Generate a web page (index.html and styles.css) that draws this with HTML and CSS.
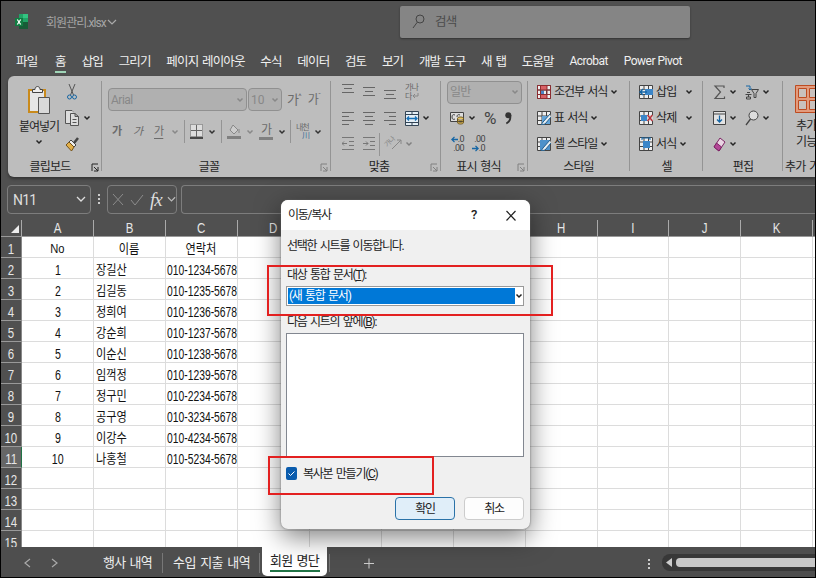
FILE: index.html
```html
<!DOCTYPE html>
<html lang="ko">
<head>
  <meta charset="utf-8">
  <title>회원관리.xlsx</title>
  <link rel="stylesheet" href="styles.css">
</head>
<body>
  <!-- 공통 아이콘 -->
  <svg class="defs">
    <symbol id="chev" viewBox="0 0 8 6"><path d="M1.5 1.5 4 4l2.5-2.5" fill="none" stroke="currentColor" stroke-width="1.5"/></symbol>
    <symbol id="launch" viewBox="0 0 8 9"><path d="M1 8V1h6M3 4l4 4M7 4v4H3" fill="none" stroke="currentColor"/></symbol>
    <symbol id="grid" viewBox="0 0 14 14"><path fill="#eee" stroke="#444" d="M.5.5h13v13H.5zM.5 5h13M.5 9.5h13M5 .5v13M9.5.5v13"/></symbol>
  </svg>

  <div class="window">
    <div class="titlebar">
      <svg class="logo" width="13" height="16" viewBox="0 0 13 16"><path fill="#21a366" d="M4 0h9v8H4z"/><path fill="#33c481" d="M8 0h5v4H8z"/><path fill="#185c37" d="M4 8h9v7H4z"/><path fill="#107c41" d="M0 4h8v8H0z"/><path d="m2.3 5.5 3.4 5M5.7 5.5l-3.4 5" stroke="#fff" stroke-width="1.3"/></svg>
      <span class="filename">회원관리.xlsx</span>
      <svg class="file-chev" width="10" height="7" viewBox="0 0 10 7"><path d="m1 1 4 4 4-4" fill="none" stroke="#aaa" stroke-width="1.2"/></svg>
      <div class="search">
        <svg width="13" height="16" viewBox="0 0 13 16"><circle cx="8" cy="5" r="4" fill="none" stroke="#444"/><path d="M5.3 8.2 1 14" stroke="#444"/></svg>
        <span>검색</span>
      </div>
    </div>

    <div class="menu">
      <span>파일</span><span class="on">홈</span><span>삽입</span><span>그리기</span><span>페이지 레이아웃</span><span>수식</span><span>데이터</span><span>검토</span><span>보기</span><span>개발 도구</span><span>새 탭</span><span>도움말</span><span class="en">Acrobat</span><span class="en">Power Pivot</span>
    </div>

    <div class="ribbon">
      <div class="group clipboard">
        <div class="body">
          <div class="paste">
            <svg width="24" height="30" viewBox="0 0 24 30"><path fill="#e6e6e6" stroke="#c98a1b" stroke-width="2" d="M2 5h16v22H2z"/><path fill="#eee" stroke="#444" d="M5.500 7.500v-3h2.500c0-4 5-4 5 0h2.500v3z"/><path fill="#d9d9d9" stroke="#555" d="M11.500 12.500h11v16h-11z"/></svg>
            <span>붙여넣기</span>
            <svg class="chev"><use href="#chev"/></svg>
          </div>
          <div class="clip-tools">
            <div class="row"><svg width="10" height="16" viewBox="0 0 10 16"><path d="M2 0 6.500 11M8 0 3.500 11" stroke="#555" fill="none"/><circle cx="2.500" cy="13" r="2" fill="none" stroke="#1666a5"/><circle cx="7.500" cy="13" r="2" fill="none" stroke="#1666a5"/></svg></div>
            <div class="row"><svg width="14" height="16" viewBox="0 0 14 16"><path fill="#ddd" stroke="#555" d="M5 13.500H.5V.5H7l1 1M5.500 3.500H10l3.500 3v9h-8zM10 3.500v3h3.500M7.500 9.500h4M7.500 12.500h4"/></svg><svg class="chev"><use href="#chev"/></svg></div>
            <div class="row"><svg width="14" height="15" viewBox="0 0 14 15"><path d="m13 1-4 5" stroke="#444" stroke-width="2.500"/><path fill="#eee" stroke="#444" d="m6 3 5 5-2 2-5-5z"/><path fill="#e2b04b" stroke="#74521a" d="m4 5-3 3 5.500 6L9 10z"/></svg></div>
          </div>
        </div>
        <div class="label">클립보드<svg class="launch"><use href="#launch"/></svg></div>
      </div>

      <div class="group font">
        <div class="body">
          <div class="font-row">
            <div class="combo family"><span>Arial</span><svg class="chev"><use href="#chev"/></svg></div>
            <div class="combo size"><span>10</span><svg class="chev"><use href="#chev"/></svg></div>
            <span class="grow">가<sup>^</sup></span>
            <span class="shrink">가<sup>ˇ</sup></span>
          </div>
          <div class="font-row marks">
            <b>가</b><i>가</i><u>가</u><svg class="chev dim"><use href="#chev"/></svg>
            <span class="sep"></span>
            <svg width="13" height="15" viewBox="0 0 13 15"><path fill="#ddd" stroke="#666" stroke-dasharray="1 1" d="M.5.5h12v12H.5z"/><path stroke="#666" d="M6.500 1v12M1 6.500h11"/><path stroke="#222" stroke-width="1.500" d="M0 14h13"/></svg>
            <svg class="chev"><use href="#chev"/></svg>
            <span class="sep"></span>
            <svg width="14" height="16" viewBox="0 0 14 16"><path fill="#ccc" stroke="#888" d="m6 1 5 5-4 4-4-4zM12 5v4"/><path fill="#808080" d="M0 12h14v3H0z"/></svg>
            <svg class="chev dim"><use href="#chev"/></svg>
            <span class="color">가</span>
            <svg class="chev"><use href="#chev"/></svg>
            <span class="sep"></span>
            <span class="ruby">내천<em>川</em></span>
            <svg class="chev"><use href="#chev"/></svg>
          </div>
        </div>
        <div class="label">글꼴<svg class="launch dim"><use href="#launch"/></svg></div>
      </div>

      <div class="group align">
        <div class="body">
          <div class="row">
            <svg width="12" height="20" viewBox="0 0 12 20"><path stroke="#666" d="M0 2.500h12M2 6.500h8M0 10.500h12"/></svg>
            <svg width="12" height="20" viewBox="0 0 12 20"><path stroke="#666" d="M0 5.500h12M2 9.500h8M0 13.500h12"/></svg>
            <svg width="12" height="20" viewBox="0 0 12 20"><path stroke="#666" d="M0 8.500h12M2 12.500h8M0 16.500h12"/></svg>
            <span class="wrap">가나<br>다<svg width="7" height="6" viewBox="0 0 7 6"><path d="M6 0v3H1m2-2L1 3l2 2" fill="none" stroke="#888"/></svg></span>
          </div>
          <div class="row">
            <svg width="12" height="15" viewBox="0 0 12 15"><path stroke="#666" d="M0 1.500h12M0 5.500h7M0 9.500h12M0 13.500h7"/></svg>
            <svg width="12" height="15" viewBox="0 0 12 15"><path stroke="#666" d="M0 1.500h12M2 5.500h8M0 9.500h12M2 13.500h8"/></svg>
            <svg width="12" height="15" viewBox="0 0 12 15"><path stroke="#666" d="M0 1.500h12M5 5.500h7M0 9.500h12M5 13.500h7"/></svg>
            <svg width="14" height="15" viewBox="0 0 14 15"><path fill="#e4eef5" stroke="#345" d="M.5.5h13v14H.5zM.5 3.500h13M.5 11.500h13M7 .5v3M7 11.500v3"/><path d="M2 7.500h10M4 5.500l-2 2 2 2M10 5.500l2 2-2 2" fill="none" stroke="#1670b8" stroke-width="1.300"/></svg>
            <svg class="chev"><use href="#chev"/></svg>
          </div>
          <div class="row">
            <svg width="12" height="14" viewBox="0 0 12 14"><path stroke="#777" fill="none" d="M0 .5h12M7 4.500h5M7 8.500h5M0 12.500h12M0 6.500h5M2 4.500l-2 2 2 2"/></svg>
            <svg width="12" height="14" viewBox="0 0 12 14"><path stroke="#777" fill="none" d="M0 .5h12M7 4.500h5M7 8.500h5M0 12.500h12M0 6.500h5M3 4.500l2 2-2 2"/></svg>
            <span class="sep"></span>
            <span class="orient"><small>가나</small><svg width="11" height="11" viewBox="0 0 11 11"><path d="M1 10 10 1M6 1h4v4" fill="none" stroke="#888"/></svg></span>
            <svg class="chev dim"><use href="#chev"/></svg>
          </div>
        </div>
        <div class="label">맞춤<svg class="launch dim"><use href="#launch"/></svg></div>
      </div>

      <div class="group number">
        <div class="body">
          <div class="row"><div class="combo format"><span>일반</span><svg class="chev"><use href="#chev"/></svg></div></div>
          <div class="row">
            <svg width="14" height="14" viewBox="0 0 14 14"><path fill="#ddd" stroke="#444" d="M.5 1.500h13v9H.5z"/><path d="M5 4c-2-1-3 0-3 2s1 3 3 2M10 4c-2-1-3 0-3 2" fill="none" stroke="#444"/><path fill="#e6c464" stroke="#66501c" d="M7.500 7.500c0-2 6-2 6 0v4c0 2-6 2-6 0zM7.500 8c0 1.500 6 1.500 6 0M7.500 10c0 1.500 6 1.500 6 0"/></svg>
            <svg class="chev"><use href="#chev"/></svg>
            <span class="percent">%</span>
            <svg class="comma" width="7" height="13" viewBox="0 0 7 13"><circle cx="3.300" cy="3.300" r="3" fill="#333"/><path d="M5.300 3c.5 4-1 7-4 8.500" fill="none" stroke="#333" stroke-width="1.800"/></svg>
          </div>
          <div class="row">
            <span class="decimal"><svg width="7" height="7" viewBox="0 0 8 7"><path d="M1 3.500h7M4 .5l-3 3 3 3" fill="none" stroke="#1666a5" stroke-width="1.500"/></svg><span>.0</span><span class="low">.00</span></span>
            <span class="decimal"><span class="low">.00</span><svg width="7" height="7" viewBox="0 0 8 7"><path d="M0 3.500h7M4 .5l3 3-3 3" fill="none" stroke="#1666a5" stroke-width="1.500"/></svg><span>.0</span></span>
          </div>
        </div>
        <div class="label">표시 형식<svg class="launch dim"><use href="#launch"/></svg></div>
      </div>

      <div class="group styles">
        <div class="body">
          <div class="row"><svg width="14" height="14" viewBox="0 0 14 14"><use href="#grid"/><path fill="#d96065" d="M4 1h6v4H4zM4 9.500h6V13H4z"/><path fill="#4b84c4" d="M4 5.500h3v3.500H4z"/><path fill="none" stroke="#8c2c30" d="M.5.5h13v13H.5zM.5 5h13M.5 9.500h13M3.500 0v14M10 0v14"/></svg><span>조건부 서식</span><svg class="chev"><use href="#chev"/></svg></div>
          <div class="row"><svg width="14" height="14" viewBox="0 0 14 14"><use href="#grid"/><path fill="#63a4d8" d="M5 5h8v8H5z"/><path d="m13 3-7 8-2 3 4-1 6-7" fill="#e8eef2" stroke="#235f8e"/></svg><span>표 서식</span><svg class="chev"><use href="#chev"/></svg></div>
          <div class="row"><svg width="14" height="14" viewBox="0 0 14 14"><use href="#grid"/><path fill="#4d91ca" d="M3 3h10v10H3z"/><path d="m13 3-7 8-2 3 4-1 6-7" fill="#e8eef2" stroke="#235f8e"/></svg><span>셀 스타일</span><svg class="chev"><use href="#chev"/></svg></div>
        </div>
        <div class="label">스타일</div>
      </div>

      <div class="group cells">
        <div class="body">
          <div class="row"><svg width="14" height="14" viewBox="0 0 14 14"><use href="#grid"/><path fill="#3c86c8" d="M6 4h8v6H6z"/><path fill="#eee" d="M1 5h5v4H1z"/><path d="M8 7H1m3-3L1 7l3 3" fill="none" stroke="#1666a5" stroke-width="1.500"/></svg><span>삽입</span><svg class="chev far"><use href="#chev"/></svg></div>
          <div class="row"><svg width="14" height="14" viewBox="0 0 14 14"><use href="#grid"/><path fill="#3c86c8" d="M2 4h6v6H2z"/><path fill="#d5d5d5" d="M8 4h6v6H8z"/><path d="m8.500 4 5 6M13.500 4l-5 6" stroke="#b8323b" stroke-width="1.500"/></svg><span>삭제</span><svg class="chev far"><use href="#chev"/></svg></div>
          <div class="row"><svg width="14" height="14" viewBox="0 0 14 14"><use href="#grid"/><path fill="#3c86c8" d="M4 4h7v7H4z"/><path d="M3 1h8M3 0v3M11 0v3" stroke="#1666a5"/></svg><span>서식</span><svg class="chev"><use href="#chev"/></svg></div>
        </div>
        <div class="label">셀</div>
      </div>

      <div class="group edit">
        <div class="body">
          <div class="row">
            <svg width="13" height="15" viewBox="0 0 13 15"><path d="M11 3V1H2l5.500 6L2 13.500h9.500v-2" fill="none" stroke="#555" stroke-width="1.200"/></svg><svg class="chev"><use href="#chev"/></svg>
            <span class="sort"><svg width="14" height="15" viewBox="0 0 14 15"><path d="M1 1h4v4M3.500 3.500 5 5l1.500-1.500" fill="none" stroke="#1666a5"/><path d="M2 7.500h3M.5 9.500h6M3.500 9.500V12M1.500 12h4v2h-4zM6.500 4.500h7l-2.500 4v4H9v-4z" fill="none" stroke="#444"/></svg></span><svg class="chev"><use href="#chev"/></svg>
          </div>
          <div class="row">
            <svg width="13" height="14" viewBox="0 0 13 14"><path fill="#e3e3e3" stroke="#444" d="M.5.5h12v13H.5zM.5 3h12"/><path d="M6.500 4.500V11M4 8.500l2.500 2.500L9 8.500" fill="none" stroke="#1666a5" stroke-width="1.300"/></svg><svg class="chev"><use href="#chev"/></svg>
            <span class="sort"><svg width="14" height="16" viewBox="0 0 14 16"><circle cx="8.500" cy="5.500" r="4.500" fill="#ddd" stroke="#444"/><path d="M5.500 9 1 15" stroke="#444" stroke-width="1.300"/></svg></span><svg class="chev"><use href="#chev"/></svg>
          </div>
          <div class="row">
            <svg width="13" height="15" viewBox="0 0 13 15"><path fill="#e9d5e3" stroke="#7d2465" d="m7 1 5 4-6 9-5-4z"/><path fill="#b44897" stroke="#7d2465" d="m3.500 6 5 4L6 14l-5-4z"/></svg><svg class="chev"><use href="#chev"/></svg>
          </div>
        </div>
        <div class="label">편집</div>
      </div>

      <div class="group addin">
        <div class="body">
          <svg width="29" height="28" viewBox="0 0 29 28"><path fill="#e29b7d" stroke="#bd4b20" d="M.5.5h28v27H.5z"/><path fill="#c9c1bd" stroke="#bd4b20" d="M3.500 3.500h8v9h-8zM14.500 3.500h8v9h-8zM3.500 15.500h8v9h-8zM14.500 15.500h8v9h-8z"/></svg>
          <span>추가</span><span>기능</span>
        </div>
        <div class="label">추가 기능</div>
      </div>
    </div>

    <div class="formula">
      <div class="box name"><span>N11</span><svg width="10" height="7" viewBox="0 0 10 7"><path d="m1 1 4 4 4-4" fill="none" stroke="#ddd" stroke-width="1.300"/></svg></div>
      <div class="dots"><i></i><i></i><i></i></div>
      <div class="box fx">
        <svg width="12" height="13" viewBox="0 0 12 13"><path d="m1 1 10 11M11 1 1 12" stroke="#8c8c8c"/></svg>
        <svg width="14" height="12" viewBox="0 0 14 12"><path d="m1 6 4 5L13 1" fill="none" stroke="#8c8c8c"/></svg>
        <em>fx</em>
        <svg width="9" height="7" viewBox="0 0 10 7"><path d="m1 1 4 4 4-4" fill="none" stroke="#bbb" stroke-width="1.300"/></svg>
      </div>
      <div class="box input"></div>
    </div>

    <div class="sheet" id="sheet"></div>

    <div class="tabs">
      <svg class="prev" width="7" height="10" viewBox="0 0 7 10"><path d="M6 1 1 5l5 4" fill="none" stroke="#aaa" stroke-width="1.200"/></svg>
      <svg class="next" width="7" height="10" viewBox="0 0 7 10"><path d="m1 1 5 4-5 4" fill="none" stroke="#aaa" stroke-width="1.200"/></svg>
      <span class="tab events">행사 내역</span>
      <span class="tab money">수입 지출 내역</span>
      <span class="tab active"><span>회원 명단</span></span>
      <span class="tab-end"></span>
      <svg class="plus" width="10" height="11" viewBox="0 0 10 11"><path d="M5 .5v10M0 5.500h10" stroke="#ccc"/></svg>
      <div class="dots"><i></i><i></i><i></i></div>
      <div class="scroll"><svg width="6" height="9" viewBox="0 0 6 9"><path fill="#ccc" d="M6 0v9L0 4.500z"/></svg><div class="thumb"></div></div>
    </div>
  </div>

  <!-- 이동/복사 대화상자 -->
  <div class="dialog">
    <div class="dialog-title"><span>이동/복사</span><b>?</b><svg width="10" height="11" viewBox="0 0 10 11"><path d="m.5 1 9 9.500M9.500 1l-9 9.500" stroke="#222" stroke-width="1.200"/></svg></div>
    <div class="dialog-body">
      <p class="msg">선택한 시트를 이동합니다.</p>
      <p class="field">대상 통합 문서(<u>T</u>):</p>
      <div class="select"><span>(새 통합 문서)</span><svg class="chev"><use href="#chev"/></svg></div>
      <p class="before">다음 시트의 앞에(<u>B</u>):</p>
      <div class="list"></div>
      <div class="check"><svg width="11" height="13" viewBox="0 0 11 13"><rect width="11" height="13" rx="2" fill="#0a5cad"/><path d="m2.500 6.500 2 2 4-4" fill="none" stroke="#fff"/></svg><span>복사본 만들기(<u>C</u>)</span></div>
      <div class="buttons"><button class="ok">확인</button><button>취소</button></div>
    </div>
  </div>
  <div class="mark mark-book"></div>
  <div class="mark mark-copy"></div>

  <script>
    var columns = ["A", "B", "C", "D", "E", "F", "G", "H", "I", "J", "K", ""];
    var data = [
      ["No", "이름", "연락처"],
      ["1", "장길산", "010-1234-5678"],
      ["2", "김길동", "010-1235-5678"],
      ["3", "정희여", "010-1236-5678"],
      ["4", "강순희", "010-1237-5678"],
      ["5", "이순신", "010-1238-5678"],
      ["6", "임꺽정", "010-1239-5678"],
      ["7", "정구민", "010-2234-5678"],
      ["8", "공구영", "010-3234-5678"],
      ["9", "이강수", "010-4234-5678"],
      ["10", "나홍철", "010-5234-5678"]
    ];

    // 열 머리글
    var html = '<div class="corner"><svg width="9" height="9"><path d="M8 0v8H0z" fill="#eee"/></svg></div>';
    columns.forEach(function (c) {
      html += '<div class="col"><span>' + c + '</span></div>';
    });

    // 15개 행
    for (var r = 0; r < 15; r++) {
      html += '<div class="num' + (r == 10 ? ' current' : '') + '"><span>' + (r + 1) + '</span></div>';
      for (var c = 0; c < columns.length; c++) {
        var text = data[r] && data[r][c] ? data[r][c] : "";
        var cls = "cell" + (r == 0 ? " head" : " c" + c);
        html += '<div class="' + cls + '">' + (text ? '<span>' + text + '</span>' : '') + '</div>';
      }
    }
    document.getElementById("sheet").innerHTML = html;
  </script>
</body>
</html>
```
FILE: styles.css
```css
* {
  box-sizing: border-box;
}

body {
  margin: 0;
  width: 816px;
  height: 578px;
  overflow: hidden;
  background: #000;
  font-family: Roboto, "Noto Sans CJK KR", sans-serif;
  font-size: 12.5px;
  letter-spacing: -0.85px;
  word-spacing: 1.5px;
  line-height: 16px;
  white-space: nowrap;
}

svg {
  display: block;
  flex: none;
}

.defs {
  position: absolute;
  width: 0;
  height: 0;
}

.window {
  display: flex;
  flex-direction: column;
  width: 814px;
  height: 576px;
  margin: 1px;
  overflow: hidden;
  background: #505050;
}

/* 제목 표시줄 */
.titlebar {
  display: flex;
  height: 49px;
}

.logo {
  margin: 13px 0 0 14px;
}

.filename {
  margin: 14px 0 0 18px;
  width: 60px;
  color: #a5a5a5;
  font-size: 12px;
  letter-spacing: -0.95px;
}

.file-chev {
  margin: 18px 0 0 1px;
}

.search {
  display: flex;
  width: 290px;
  height: 32px;
  margin: 5px 0 0 283px;
  padding: 8px 0 0 12px;
  gap: 10px;
  border-radius: 2px;
  background: #858585;
  color: #4b4b4b;
  box-shadow: 0 1px 2px #333;
}

/* 메뉴 */
.menu {
  display: flex;
  height: 26px;
  padding: 3px 0 0 15px;
  gap: 15.7px;
  color: #f0f0f0;
}

.menu span {
  height: 20px;
  line-height: 17px;
}

.menu .on {
  width: 11px;
  margin-left: 2px;
  border-bottom: 2px solid #9fd5b7;
}

.menu .en {
  font-size: 12px;
  letter-spacing: -0.5px;
  word-spacing: 0;
}

/* 리본 */
.ribbon {
  display: flex;
  flex: none;
  height: 101px;
  margin-left: 7px;
  border-radius: 6px 0 0 6px;
  background: #bdbdbd;
  color: #252525;
  font-size: 12px;
  box-shadow: 0 2px 3px #333;
  overflow: hidden;
}

.group {
  position: relative;
  flex: none;
  padding-top: 3px;
}

.group::after {
  content: "";
  position: absolute;
  top: 5px;
  right: 0;
  width: 1px;
  height: 90px;
  background: #949494;
}

.body {
  display: flex;
  flex-direction: column;
  height: 78px;
}

.row {
  display: flex;
  align-items: center;
  height: 26px;
}

.label {
  display: flex;
  justify-content: center;
  line-height: 20px;
}

.launch {
  position: absolute;
  right: 3px;
  bottom: 5px;
  width: 8px;
  height: 9px;
}

.chev {
  width: 8px;
  height: 6px;
}

.dim {
  color: #808080;
}

.sep {
  width: 1px;
  height: 23px;
  background: #949494;
}

.combo {
  display: flex;
  align-items: center;
  justify-content: space-between;
  height: 23px;
  padding: 0 2px;
  border: 1px solid #909090;
  border-radius: 4px;
  background: #b0b0b0;
  color: #888;
}

.clipboard { width: 94px; }
.clipboard .body { flex-direction: row; }
.clipboard .label { padding-right: 10px; }

.paste {
  display: flex;
  flex-direction: column;
  align-items: center;
  width: 57px;
  padding: 6px 0 0 5px;
}

.paste .chev { margin-top: 5px; }
.paste span { margin-top: 5px; height: 14px; line-height: 14px; letter-spacing: -1.1px; }
.clip-tools .row:first-child { padding-left: 2px; }
.clip-tools .row .chev { margin-left: 4px; }

.font { width: 229px; }
.font .label { padding-right: 15px; }

.font-row {
  display: flex;
  flex: none;
  align-items: center;
  height: 23px;
  margin: 9px 0 0 6px;
  color: #6b6b6b;
}

.family { width: 139px; }
.size { width: 34px; margin-left: 1px; letter-spacing: 0; }
.family span { letter-spacing: -0.5px; }
.grow { margin-left: 5px; font-size: 13px; }
.shrink { margin-left: 7px; font-size: 12px; }
.font-row sup { font-size: 8px; line-height: 0; }
.font-row.marks { margin: 9px 0 0 10px; }
.marks b, .marks i, .marks u { width: 21px; font-size: 11px; }
.marks .chev { margin: 0 5px; color: #333; }
.marks .chev.dim { color: #888; }
.marks u { width: 14px; text-underline-offset: 3px; }
.marks u + .chev { margin-left: 3px; }
.marks .sep { margin-right: 5px; }
.color { width: 14px; line-height: 13px; text-align: center; border-bottom: 3px solid #808080; }
.color + .chev { margin-right: 4px; }
.marks .sep:nth-of-type(3) { margin-right: 3px; }

.ruby {
  width: 13px;
  font-size: 8px;
  line-height: 8px;
  letter-spacing: -1px;
}

.ruby em {
  display: block;
  text-align: right;
  font-style: normal;
  color: #386c98;
}

.align { width: 110px; padding-left: 11px; }
.align .row { gap: 9px; }
.align .row .chev { margin-left: -6px; }
.align .row .sep { margin-left: -5px; }
.align .label { padding-right: 25px; }
.wrap { font-size: 8px; line-height: 9px; color: #666; }
.wrap svg { display: inline-block; }
.orient { display: flex; align-items: center; width: 17px; margin-left: -4px; color: #888; }
.orient small { width: 6px; font-size: 7px; transform: rotate(-45deg); }

.number { width: 87px; padding-left: 9px; }
.number .combo { width: 75px; margin-left: -3px; }
.number .row .chev { margin-left: 4px; }
.percent { margin-left: 8px; font-size: 17px; color: #444; letter-spacing: 0; }
.comma { margin-left: 9px; }

.decimal {
  display: flex;
  flex-wrap: wrap;
  justify-content: flex-end;
  align-items: center;
  width: 14px;
  margin-right: 7px;
  font-size: 9px;
  line-height: 9px;
  letter-spacing: -0.6px;
  color: #444;
}

.decimal .low { width: 100%; text-align: right; }
.number .label { padding-right: 21px; }

.styles { width: 102px; padding-left: 9px; }
.styles .row, .cells .row { gap: 3px; }
.styles .row span { letter-spacing: -1.1px; }
.styles .label { padding-right: 10px; }

.cells { width: 73px; padding-left: 9px; }
.cells .row .far { margin-left: 6px; }
.cells .label { padding-right: 9px; }

.edit { width: 80px; padding-left: 10px; }
.edit .row .chev { margin-left: 3px; }
.sort { margin-left: 8px; }
.edit .label { padding-right: 10px; }

.addin { width: 60px; }
.addin .body { padding: 6px 0 0 12px; }
.addin span { margin-left: 1px; line-height: 16px; }
.addin span:nth-of-type(1) { margin-top: 5px; }
.addin .label { justify-content: flex-start; padding-left: 2px; }

/* 수식 입력줄 */
.formula {
  display: flex;
  flex: none;
  height: 43px;
  padding: 8px 0 0 6px;
}

.box {
  display: flex;
  align-items: center;
  height: 29px;
  border: 1px solid #7d7d7d;
  border-radius: 4px;
  color: #ddd;
}

.name {
  width: 84px;
  padding: 0 4px 0 5px;
  justify-content: space-between;
  font-size: 14px;
  letter-spacing: -0.8px;
}

.dots {
  display: flex;
  flex-direction: column;
  gap: 2px;
}

.dots i {
  width: 2px;
  height: 2px;
  background: #ccc;
}

.formula .dots { margin: 9px 7px 0; }
.fx { width: 70px; padding-left: 4px; gap: 6px; }
.fx em { width: 13px; font-family: "Liberation Serif", serif; font-size: 19px; letter-spacing: -1px; }
.fx em + svg { margin-left: -2px; }
.input { flex: 1; margin-left: 4px; border-right: 0; border-radius: 4px 0 0 4px; }

/* 시트 */
.sheet {
  display: grid;
  flex: none;
  grid-template-columns: 21px repeat(12, 71.95px);
  grid-template-rows: 17px repeat(15, 21px);
  height: 327px;
  overflow: hidden;
  background: #fff;
  font-family: "Liberation Sans", "Noto Sans CJK KR", sans-serif;
  letter-spacing: 0;
}

.corner, .col, .num {
  display: flex;
  align-items: center;
  justify-content: center;
  background: #505050;
  color: #e6e6e6;
  border-bottom: 1px solid #999;
  font-size: 14px;
}

.num { padding-top: 3px; }
.col { border-right: 1px solid #aaa; }
.corner { align-items: flex-end; justify-content: flex-end; border-right: 1px solid #aaa; }
.corner svg { margin: 0 1px 2px 0; }
.num { border-right: 1px solid #888; }
.num.current { background: #666; border-right: 1px solid #217346; }

.col span, .num span {
  display: inline-block;
  transform: scaleX(0.82);
}

.cell {
  display: flex;
  align-items: center;
  border: 1px solid #dcdcdc;
  border-width: 0 1px 1px 0;
  color: #111;
  font-size: 13px;
}

.head, .c0 { justify-content: center; }
.cell span { display: inline-block; padding-top: 3px; transform: scaleX(0.86); }
.cell.c0 span, .cell.c2 span { font-size: 14px; }
.cell.c0 span { transform: scaleX(0.76); }
.cell.c1 span, .cell.c2 span { transform-origin: left; margin-left: 2px; }
.cell.c2 span { margin-left: 1px; transform: scaleX(0.738); }

/* 시트 탭 */
.tabs {
  display: flex;
  flex: none;
  height: 30px;
  background: #4e4e4e;
  color: #eee;
  font-size: 13px;
  letter-spacing: -0.7px;
}

.prev { margin: 11px 0 0 23px; }
.next { margin: 11px 0 0 20px; }

.tab {
  height: 20px;
  margin-top: 6px;
  line-height: 19px;
  border-right: 1px solid #777;
}

.events { width: 60px; margin-left: 45px; }
.money { width: 97px; padding-left: 10px; letter-spacing: -0.5px; }

.tab.active {
  width: 65px;
  height: 29px;
  margin: 0 0 0 2px;
  padding: 4px 7px 0 8px;
  border: 0;
  border-radius: 0 0 5px 5px;
  background: #fff;
  color: #222;
}

.tab.active span {
  display: block;
  height: 21px;
  border-bottom: 2px solid #217346;
}

.tab-end { width: 1px; height: 18px; margin: 7px 0 0 2px; background: #777; }
.plus { margin: 11px 0 0 34px; }
.tabs .dots { margin: 12px 0 0 auto; gap: 2px; }

.scroll {
  display: flex;
  align-items: center;
  width: 153px;
  height: 17px;
  margin: 7px 0 0 12px;
  padding-left: 4px;
  gap: 4px;
  border-radius: 8px 0 0 8px;
  background: #383838;
}

.thumb {
  flex: 1;
  height: 9px;
  border-radius: 4px 0 0 4px;
  background: #c8c8c8;
}

/* 대화상자 */
.dialog {
  position: absolute;
  left: 281px;
  top: 200px;
  width: 249px;
  height: 329px;
  overflow: hidden;
  border-radius: 7px;
  background: #f0f0f0;
  color: #222;
  font-size: 12px;
  letter-spacing: -1.25px;
  word-spacing: 1.7px;
  box-shadow: 0 0 2px #666, 0 8px 26px rgba(0, 0, 0, 0.5);
}

.dialog-title {
  display: flex;
  align-items: center;
  height: 30px;
  padding: 0 14px 0 7px;
  background: #fff;
}

.dialog-title span { flex: 1; }
.dialog-title b { margin-right: 30px; font-weight: 500; font-size: 13px; }

.dialog-body {
  padding: 8px 6px 0 5px;
}

.dialog p { margin: 0 1px; }
.dialog .msg { height: 29px; }
.dialog .field { height: 19px; }
.dialog .before { margin-top: 8px; height: 19px; }

.select {
  display: flex;
  align-items: center;
  height: 20px;
  border: 1px solid #999;
  background: #fff;
}

.select span {
  flex: 1;
  height: 16px;
  margin-left: 1px;
  padding-left: 1px;
  background: #0078d7;
  color: #fff;
}

.list {
  height: 124px;
  border: 1px solid #828790;
  background: #fff;
}

.check {
  display: flex;
  align-items: center;
  height: 33px;
  gap: 6px;
}

.buttons {
  display: flex;
  justify-content: flex-end;
  gap: 9px;
  margin-top: 7px;
}

.buttons button {
  width: 60px;
  height: 23px;
  padding: 0;
  border: 1px solid #ccc;
  border-radius: 4px;
  background: #fdfdfd;
  color: #222;
  font: inherit;
  letter-spacing: inherit;
}

.buttons .ok {
  border-color: #2a72a8;
  background: #e0eef9;
}

/* 강조 표시 */
.mark {
  position: absolute;
  border: 2px solid #e32020;
}

.mark-book {
  left: 267px;
  top: 265px;
  width: 286px;
  height: 51px;
}

.mark-copy {
  left: 268px;
  top: 456px;
  width: 166px;
  height: 39px;
}
```
